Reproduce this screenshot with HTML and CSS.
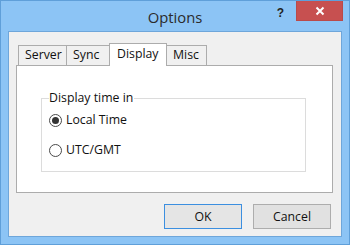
FILE: index.html
```html
<!DOCTYPE html>
<html>
<head>
<meta charset="utf-8">
<link rel="stylesheet" href="styles.css">
</head>
<body>
<div class="window">
  <div class="titlebar">
    <div class="tb-spacer"></div>
    <div class="title">Options</div>
    <div class="tb-controls">
      <span class="help">?</span>
      <span class="close"><svg width="10" height="10" viewBox="0 0 10 10"><path d="M1.5 1.5 L8.5 8.5 M8.5 1.5 L1.5 8.5" stroke="#fff" stroke-width="2" fill="none"/></svg></span>
    </div>
  </div>
  <div class="client">
    <div class="tabs">
      <div class="tab tab-server">Server</div>
      <div class="tab tab-sync">Sync</div>
      <div class="tab tab-active">Display</div>
      <div class="tab tab-misc">Misc</div>
    </div>
    <div class="panel">
      <fieldset class="group">
        <legend class="legend">Display time in</legend>
        <label class="radio-row first"><span class="radio checked"></span><span class="radio-label">Local Time</span></label>
        <label class="radio-row second"><span class="radio"></span><span class="radio-label">UTC/GMT</span></label>
      </fieldset>
    </div>
    <div class="buttons">
      <div class="btn btn-default">OK</div>
      <div class="btn">Cancel</div>
    </div>
  </div>
</div>
</body>
</html>
```
FILE: styles.css
```css
* { box-sizing: border-box; }
html, body { margin: 0; padding: 0; }
body {
  width: 350px;
  height: 245px;
  overflow: hidden;
  font-family: "Open Sans", "Noto Sans", sans-serif;
  font-size: 12.3px;
  color: #111;
}
.window {
  width: 350px;
  height: 245px;
  background: #8cc4f5;
  border: 1px solid #5f9fd9;
  display: flex;
  flex-direction: column;
}
.titlebar {
  height: 30px;
  display: grid;
  grid-template-columns: 1fr auto 1fr;
  align-items: start;
}
.title {
  font-size: 14.8px;
  color: #2b2b2b;
  line-height: 30px;
  padding-top: 1px;
}
.tb-controls {
  display: flex;
  justify-content: flex-end;
  align-items: flex-start;
}
.help {
  font-family: "Liberation Sans", sans-serif;
  font-weight: bold;
  font-size: 12px;
  color: #222;
  margin-top: 5px;
  margin-right: 12px;
}
.close {
  width: 47px;
  height: 20px;
  background: #c75050;
  border: 1px solid #b94a4a;
  border-top: none;
  display: flex;
  align-items: center;
  justify-content: center;
  margin-right: 6px;
}
.client {
  margin: 0 7px;
  height: 206px;
  background: #f0f0f0;
  border: 1px solid #6ea6da;
  padding: 11px 8px 0 7px;
  display: flex;
  flex-direction: column;
}
.tabs {
  display: flex;
  height: 22px;
  align-items: flex-end;
  padding-left: 2px;
  position: relative;
  z-index: 1;
}
.tab {
  height: 20px;
  border: 1px solid #acacac;
  border-bottom: none;
  background: #f0f0f0;
  line-height: 18px;
  padding: 0 6px;
  margin-left: -1px;
}
.tab-server { margin-left: 0; width: 49px; }
.tab-sync { width: 44px; }
.tab-active {
  height: 23px;
  background: #fff;
  margin-bottom: -1px;
  width: 58px;
  line-height: 20px;
  padding: 0 7px;
}
.tab-misc { width: 41px; margin-left: -1px; }
.panel {
  width: 317px;
  height: 128px;
  background: #fff;
  border: 1px solid #acacac;
  padding: 24px 0 0 24px;
}
.group {
  margin: 0;
  width: 265px;
  height: 82px;
  border: 1px solid #dcdcdc;
  padding: 5px 0 0 7px;
  display: flex;
  flex-direction: column;
}
.legend {
  padding: 0 1px 0 0;
  margin-left: 0;
  line-height: 16px;
}
.radio-row {
  display: flex;
  align-items: center;
  gap: 4px;
  height: 16px;
}
.radio-row.first { margin-top: 1px; }
.radio-row.second { margin-top: 14px; }
.radio {
  width: 13px;
  height: 13px;
  border-radius: 50%;
  border: 1px solid #4a4a4a;
  background: #fff;
  display: flex;
  align-items: center;
  justify-content: center;
}
.radio.checked::after {
  content: "";
  width: 7px;
  height: 7px;
  border-radius: 50%;
  background: #333;
}
.radio-label { line-height: 16px; }
.buttons {
  display: flex;
  justify-content: flex-end;
  gap: 11px;
  margin-top: 11px;
  padding-right: 2px;
}
.btn {
  width: 78px;
  height: 25px;
  background: #e1e1e1;
  border: 1px solid #adadad;
  text-align: center;
  line-height: 23px;
}
.btn-default {
  border: 1px solid #3c8fe0;
  background: #e5e5e5;
}
```
